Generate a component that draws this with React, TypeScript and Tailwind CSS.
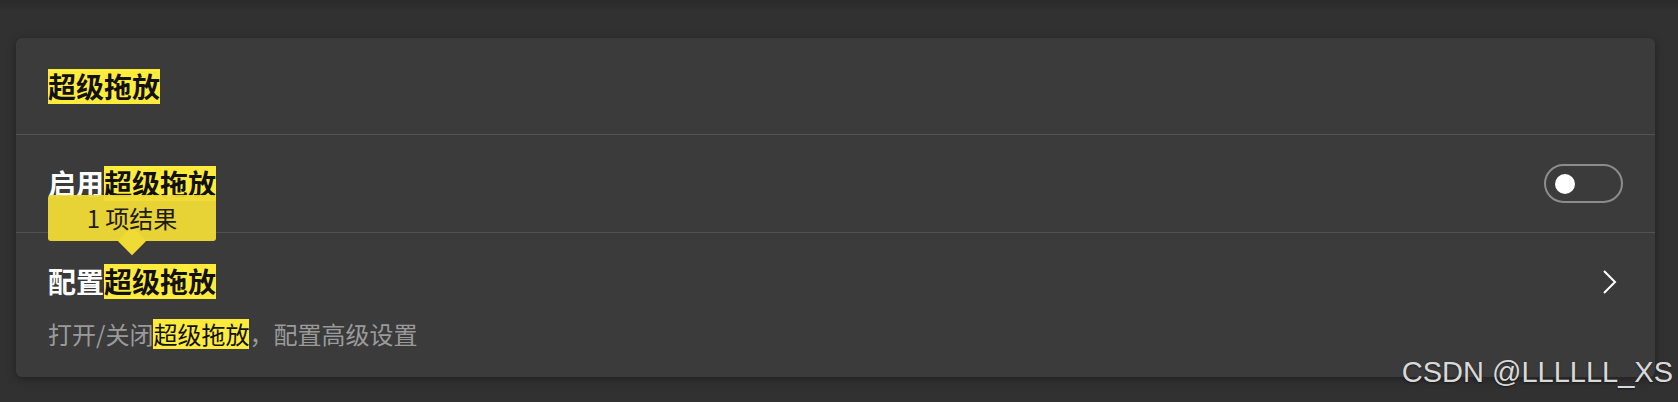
import React from 'react'

const cjk = { fontFamily: '"Noto Sans CJK SC", "Noto Sans", sans-serif' }

function Mark({ children, bold }: { children: React.ReactNode; bold?: boolean }) {
  return (
    <span
      className={
        'inline-block bg-[#ffeb3b] text-[#111111] ' + (bold ? 'font-bold' : 'font-normal')
      }
    >
      {children}
    </span>
  )
}

function Toggle() {
  return (
    <div className="w-[79px] h-[39px] rounded-full border-2 border-[#8c8c8c] flex items-center pl-[9px] box-border">
      <div className="w-[20px] h-[20px] rounded-full bg-white" />
    </div>
  )
}

function Chevron() {
  return (
    <svg width="15" height="26" viewBox="0 0 15 26" className="mr-[6px]">
      <polyline points="2,2 13,13 2,24" fill="none" stroke="#ffffff" strokeWidth="2" />
    </svg>
  )
}

export default function App() {
  return (
    <div className="relative w-[1678px] h-[402px] bg-[#313131] overflow-hidden" style={cjk}>
      <div className="h-[12px] bg-gradient-to-b from-[#2a2a2a] to-[#313131]" />
      <div className="mt-[26px] ml-[16px] w-[1639px] bg-[#3b3b3b] rounded-[6px] shadow-[0_2px_8px_rgba(0,0,0,0.35)]">
        <div className="h-[96px] px-[32px] flex items-center">
          <h2 className="text-[28px] leading-[35px] font-bold">
            <Mark bold>超级拖放</Mark>
          </h2>
        </div>

        <div className="h-px bg-[#525252]" />

        <div className="relative h-[97px] px-[32px] flex items-center justify-between">
          <div className="text-[28px] leading-[35px] font-bold text-white">
            启用<Mark bold>超级拖放</Mark>
          </div>
          <Toggle />

          <div className="absolute left-[32px] top-[60px] z-10">
            <div className="relative w-[168px] h-[46px] rounded-[3px] bg-[#f0db36]/95 flex items-center justify-center text-[24px] text-[#1c1c1c]">
              <span className="relative z-10">1 项结果</span>
              <div className="absolute left-[74px] bottom-[-10px] w-[20px] h-[20px] rotate-45 bg-[#f0db36]" />
            </div>
          </div>
        </div>

        <div className="h-px bg-[#525252]" />

        <div className="h-[144px] px-[32px] pt-[31px] flex justify-between">
          <div>
            <div className="text-[28px] leading-[35px] font-bold text-white">
              配置<Mark bold>超级拖放</Mark>
            </div>
            <div className="mt-[20px] text-[24px] leading-[30px] text-[#9a9a9a]">
              打开/关闭<Mark>超级拖放</Mark>，配置高级设置
            </div>
          </div>
          <div className="h-[35px] flex items-center">
            <Chevron />
          </div>
        </div>
      </div>

      <div
        className="absolute right-[5px] bottom-[15px] text-[29px] leading-[30px] text-[#d9d9d9] [text-shadow:0_1px_2px_rgba(0,0,0,0.5)]"
        style={{ fontFamily: '"Liberation Sans", Arial, sans-serif' }}
      >
        CSDN @LLLLLL_XS
      </div>
    </div>
  )
}
